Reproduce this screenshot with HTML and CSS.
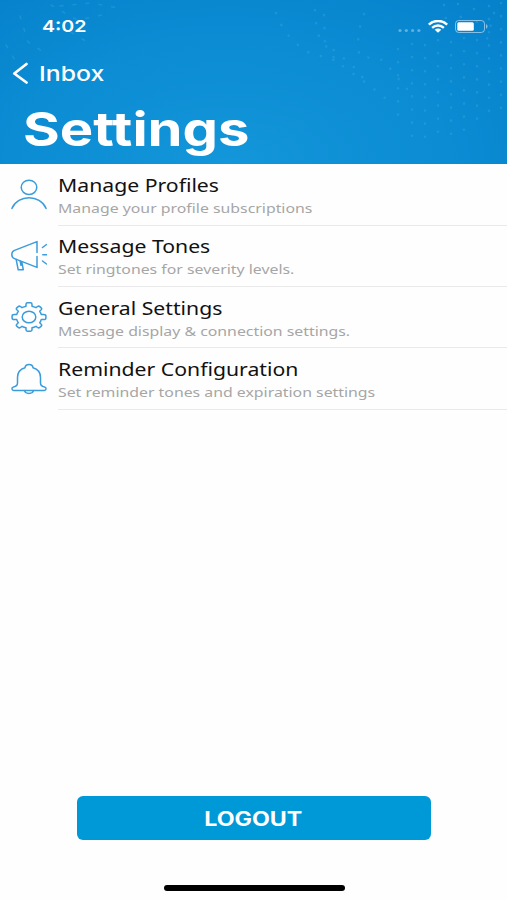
FILE: index.html
```html
<!DOCTYPE html>
<html lang="en">
<head>
  <meta charset="UTF-8">
  <meta name="viewport" content="width=device-width, initial-scale=1.0">
  <title>Settings</title>
  <link rel="stylesheet" href="styles.css">
</head>
<body>
  <header class="header">
    <svg class="header-dots" viewBox="0 0 507 164" aria-hidden="true">
      <path d="M276 13L284 31L304 51L337 61"/>
      <path d="M315 10L317 33L337 62L369 85L390 102"/>
      <path d="M324 15L325 43L352 65L370 86"/>
      <path d="M364 14L358 33L359 56L383 60L398 78L412 95"/>
      <path d="M398 49V125M412 44V138M425 45V145M438 40V142M451 42V140M464 38V135M477 40V125M489 6V115M501 3V110"/>
      <path d="M444 5L446 20M458 4L461 18M474 9L478 27M494 13L487 39"/>
      <path class="faint" d="M20 16L28 42L45 53M51 5L77 20L107 14M60 6L91 3L119 8M6 45L16 62M71 32L87 42"/>
    </svg>

    <div class="status-bar">
      <span class="time">4:02</span>
      <div class="status-icons">
        <svg width="24" height="5" viewBox="0 0 24 5">
          <g fill="#fff" opacity=".35">
            <circle cx="2" cy="2.5" r="1.6"/><circle cx="8.3" cy="2.5" r="1.6"/>
            <circle cx="14.6" cy="2.5" r="1.6"/><circle cx="20.9" cy="2.5" r="1.6"/>
          </g>
        </svg>
        <svg class="wifi" width="20" height="13" viewBox="0 0 20 13">
          <g fill="none" stroke="#fff" stroke-width="2.4">
            <path d="M.8 4.6C6-.3 14-.3 19.2 4.6"/>
            <path d="M4.1 7.8c3.4-3 8.4-3 11.8 0"/>
          </g>
          <path d="M6.7 9.8c2-1.6 4.6-1.6 6.6 0L10 12.7z" fill="#fff"/>
        </svg>
        <svg class="battery" width="33" height="13" viewBox="0 0 33 13">
          <rect x=".5" y=".5" width="29" height="12" rx="3.3" fill="none" stroke="#fff" opacity=".5"/>
          <rect x="2.3" y="2.2" width="16.5" height="8.6" rx="1.5" fill="#fff"/>
          <path d="M31 4.3c2 .6 2 3.8 0 4.4z" fill="#fff" opacity=".5"/>
        </svg>
      </div>
    </div>

    <a class="back">
      <svg width="16" height="22" viewBox="0 0 16 22">
        <path d="M14.5 2L2.3 11.5l12.2 9" fill="none" stroke="#fff" stroke-width="2.7" stroke-linecap="round" stroke-linejoin="round"/>
      </svg>
      <span class="back-label">Inbox</span>
    </a>
    <h1 class="title">Settings</h1>
  </header>

  <main class="list">
    <div class="item">
      <svg class="icon" viewBox="0 0 36 32">
        <ellipse cx="18" cy="8.3" rx="7.8" ry="7.1"/>
        <path d="M.9 29.5C7 15.2 29 15.2 35.1 29.5"/>
      </svg>
      <div class="item-text">
        <div class="item-title">Manage Profiles</div>
        <div class="item-sub">Manage your profile subscriptions</div>
      </div>
    </div>
    <div class="item">
      <svg class="icon" viewBox="0 0 36 32">
        <path d="M26 12.500V1.600L3.500 10.400Q.8 11.400.8 14.500T3.500 18.600L26 27.400V16.500"/>
        <path d="M5.200 19.600L7.200 29.800H12.300L10.800 21.800M9.200 21.300L10 25.300"/>
        <path d="M31.500 7.500l4-3M31.800 14.800h4M31.500 21l4 3"/>
      </svg>
      <div class="item-text">
        <div class="item-title">Message Tones</div>
        <div class="item-sub">Set ringtones for severity levels.</div>
      </div>
    </div>
    <div class="item">
      <svg class="icon" viewBox="0 0 36 32">
        <ellipse cx="18" cy="16" rx="6.8" ry="5.8"/>
        <path d="M15 5.200V3.200Q15 1.800 16.500 1.800H19.500Q21 1.800 21 3.200V5.200Q23 5.700 25 6.700L26.600 5.500Q27.700 4.700 28.800 5.600L30.200 6.900Q31.200 7.800 30.200 8.800L28.700 10.200Q29.800 11.700 30.200 13.400H32.700Q34.900 13.400 34.900 15V17Q34.900 18.600 32.700 18.600H30.200Q29.800 20.300 28.700 21.800L30.200 23.200Q31.200 24.200 30.200 25.100L28.800 26.400Q27.700 27.300 26.600 26.500L25 25.300Q23 26.300 21 26.800V28.800Q21 30.200 19.500 30.200H16.500Q15 30.200 15 28.800V26.800Q13 26.300 11 25.300L9.400 26.500Q8.300 27.300 7.200 26.400L5.800 25.100Q4.800 24.200 5.800 23.200L7.300 21.800Q6.200 20.300 5.800 18.600H3.300Q1.100 18.600 1.100 17V15Q1.100 13.400 3.300 13.400H5.800Q6.200 11.700 7.300 10.200L5.800 8.800Q4.800 7.800 5.800 6.900L7.200 5.600Q8.300 4.700 9.400 5.500L11 6.700Q13 5.700 15 5.200Z"/>
      </svg>
      <div class="item-text">
        <div class="item-title">General Settings</div>
        <div class="item-sub">Message display &amp; connection settings.</div>
      </div>
    </div>
    <div class="item">
      <svg class="icon" viewBox="0 0 36 32">
        <path d="M14 4.800C14.300.3 21.700.3 22 4.800C27.200 6.300 29.500 10 29.500 14.500V20C29.500 22.500 31.500 23.600 33.500 23.900C35.700 24.300 35.500 27.400 33.300 27.400H2.700C.5 27.400.3 24.300 2.500 23.900C4.500 23.600 6.500 22.500 6.500 20V14.500C6.500 10 8.800 6.300 14 4.800Z"/>
        <path d="M13.500 27.600C14.500 31.300 21.500 31.300 22.500 27.600"/>
      </svg>
      <div class="item-text">
        <div class="item-title">Reminder Configuration</div>
        <div class="item-sub">Set reminder tones and expiration settings</div>
      </div>
    </div>
  </main>

  <footer class="footer">
    <button class="logout"><span class="logout-label">LOGOUT</span></button>
    <div class="home-indicator"></div>
  </footer>
</body>
</html>
```
FILE: styles.css
```css
* {
  box-sizing: border-box;
}
body {
  margin: 0;
  height: 900px;
  display: flex;
  flex-direction: column;
  background: #fefefe;
  font-family: "Noto Sans", sans-serif;
  overflow: hidden;
}
.header {
  position: relative;
  height: 163.5px;
  flex: none;
  color: #fff;
  font-family: Inter, sans-serif;
  background: radial-gradient(ellipse 400px 230px at 45% 100%, #1496da 0%, #0b8cd3 55%, #0580ca 100%);
}
.header-dots {
  position: absolute;
  left: 0;
  top: 0;
  width: 507px;
  height: 164px;
  fill: none;
  stroke: #4bb5ea;
  stroke-width: 2.6;
  stroke-linecap: round;
  stroke-dasharray: 0.1 13;
  opacity: 0.28;
}
.header-dots .faint {
  stroke-dasharray: 3 10;
  stroke-width: 1.5;
}
.status-bar {
  position: relative;
  display: flex;
  justify-content: space-between;
  align-items: center;
  height: 52px;
  padding: 0 19.5px 0 42px;
}
/* labels are wider than the font's natural set */
.time,
.back-label,
.title,
.item-title,
.item-sub {
  display: block;
  width: max-content;
  transform-origin: left center;
  white-space: nowrap;
}
.time {
  font-size: 16.5px;
  font-weight: 600;
  transform: scaleX(1.19);
}
.status-icons {
  display: flex;
  align-items: center;
}
.status-icons svg:first-child {
  margin-top: 8px;
}
.wifi {
  margin-left: 6px;
}
.battery {
  margin-left: 7px;
}
.back {
  position: relative;
  display: flex;
  align-items: center;
  gap: 11px;
  height: 42px;
  padding-left: 12px;
}
.back-label {
  font-size: 20.5px;
  font-weight: 500;
  transform: scaleX(1.21);
}
.title {
  position: relative;
  margin: 6px 0 0 23px;
  font-size: 47px;
  line-height: 58px;
  font-weight: 700;
  transform: scaleX(1.195);
}
.list {
  flex: 1;
  padding-top: 0.7px;
}
.item {
  display: flex;
  height: 61.33px;
  padding-left: 11px;
}
.icon {
  width: 36px;
  height: 32px;
  margin-top: 14.5px;
  flex: none;
  fill: none;
  stroke: #3b9cdc;
  stroke-width: 1.5;
  stroke-linecap: round;
  stroke-linejoin: round;
}
.item-text {
  flex: 1;
  margin-left: 11px;
  padding-top: 8.7px;
  border-bottom: 1px solid #e9e9e9;
}
.item-title {
  font-size: 18px;
  line-height: 25px;
  color: #111;
  transform: scaleX(1.178);
}
.item-sub {
  font-size: 13px;
  line-height: 20px;
  color: #a6a6a6;
  transform: scaleX(1.218);
}
.footer {
  display: flex;
  flex-direction: column;
  align-items: center;
  height: 104px;
}
.logout {
  width: 354px;
  height: 44px;
  padding: 2px 0 0;
  border: none;
  border-radius: 6px;
  background: #0099d8;
  color: #fff;
  font-family: Inter, sans-serif;
  font-size: 19.5px;
  font-weight: 700;
  cursor: pointer;
}
.logout-label {
  display: inline-block;
  transform: scaleX(1.19);
}
.home-indicator {
  width: 181px;
  height: 6px;
  margin-top: 45px;
  margin-left: 1px;
  border-radius: 3px;
  background: #000;
}
```
